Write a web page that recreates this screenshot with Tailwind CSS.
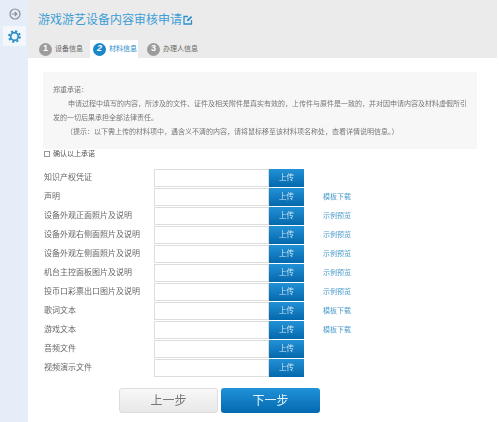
<!DOCTYPE html>
<html lang="zh-CN">
<head>
  <meta charset="UTF-8">
  <title>游戏游艺设备内容审核申请</title>
  <script src="https://cdn.jsdelivr.net/npm/@tailwindcss/browser@4"></script>
</head>
<body class="bg-white overflow-hidden font-['Liberation_Sans','Noto_Sans_CJK_SC',sans-serif]">
  <div class="flex w-[499px] h-[422px] blur-[0.35px]">
    <!-- side nav -->
    <aside class="w-[28px] shrink-0 bg-[#e4edf8] flex flex-col pt-[8px]">
      <svg class="ml-[9px] w-[12px] h-[12px]" viewBox="0 0 12 12" fill="none" stroke="#8a8f96" stroke-width="1.2">
        <circle cx="6" cy="6" r="5"/>
        <path d="M2.500 6h5M5.800 4l2 2-2 2"/>
      </svg>
      <div class="mt-[6px] ml-[3px] w-[23px] h-[20px] bg-[#f3f7fc] flex items-center justify-center">
        <svg class="w-[13px] h-[13px]" viewBox="0 0 24 24" fill="none" stroke="#2a8cc6">
          <circle cx="12" cy="12" r="7" stroke-width="3.200"/>
          <circle cx="12" cy="12" r="10" stroke-width="3.400" stroke-dasharray="3.930 3.930"/>
        </svg>
      </div>
    </aside>

    <main class="flex-1 min-w-0 flex flex-col">
      <!-- header + tabs -->
      <header class="h-[58px] bg-[#ebebeb] mr-[2px] pl-[10px] relative">
        <h1 class="pt-[12px] text-[12px] leading-[16px] text-[#3d9ed6] flex items-center">
          游戏游艺设备内容审核申请
          <svg class="w-[10px] h-[10px] ml-[1px]" viewBox="0 0 10 10" fill="none" stroke="#2f8fcb" stroke-width="1.300">
            <path d="M5 1.500H1v7.500h7.500V5"/>
            <path d="M3.800 6.300l.4-1.700L8 1l1.200 1.200-3.700 3.700z" fill="#2f8fcb" stroke="none"/>
          </svg>
        </h1>
        <nav class="absolute left-[11px] bottom-0 flex items-end h-[18px] text-[7px] text-[#666]">
          <div class="flex items-center h-[16px] gap-[3px] mb-[1px] w-[51px]">
            <span class="w-[13px] h-[13px] rounded-full bg-[#9c9c9c] text-white text-[9px] font-bold flex items-center justify-center">1</span>
            <span>设备信息</span>
          </div>
          <div class="flex items-center h-[18px] gap-[3px] bg-white w-[48px] pl-[3px] text-[#2a8ccb]">
            <span class="w-[13px] h-[13px] rounded-full bg-[#1a86c8] text-white text-[9px] font-bold italic flex items-center justify-center">2</span>
            <span>材料信息</span>
          </div>
          <div class="flex items-center h-[16px] gap-[3px] mb-[1px] ml-[9px]">
            <span class="w-[13px] h-[13px] rounded-full bg-[#9c9c9c] text-white text-[9px] font-bold flex items-center justify-center">3</span>
            <span>办理人信息</span>
          </div>
        </nav>
      </header>

      <section class="flex-1 pl-[15px]">
        <!-- notice -->
        <div class="mt-[14px] w-[434px] h-[77px] bg-[#f7f7f7] pl-[10px] pt-[11px] text-[7px] leading-[14px] text-[#777]">
          <p>郑重承诺：</p>
          <p class="pl-[15px]">申请过程中填写的内容，所涉及的文件、证件及相关附件是真实有效的，上传件与原件是一致的，并对因申请内容及材料虚假所引</p>
          <p>发的一切后果承担全部法律责任。</p>
          <p class="pl-[13px]">（提示：以下需上传的材料项中，遇含义不清的内容，请将鼠标移至该材料项名称处，查看详情说明信息。）</p>
        </div>

        <label class="ml-[1px] h-[10px] flex items-center gap-[3px] text-[7px] text-[#555]">
          <span class="w-[6px] h-[6px] border border-[#999] bg-white"></span>
          确认以上承诺
        </label>

        <!-- upload rows -->
        <div class="mt-[10px] flex flex-col gap-[1px] text-[8px] text-[#666]">
          <div class="flex items-center h-[18px]"><span class="w-[111px] pl-[1px]">知识产权凭证</span><div class="w-[115px] h-full border border-[#ddd] bg-white"></div><button class="w-[35px] h-full bg-gradient-to-b from-[#2291d6] to-[#0468ac] text-[#cfe6f5] text-[7.5px]">上传</button></div>
          <div class="flex items-center h-[18px]"><span class="w-[111px] pl-[1px]">声明</span><div class="w-[115px] h-full border border-[#ddd] bg-white"></div><button class="w-[35px] h-full bg-gradient-to-b from-[#2291d6] to-[#0468ac] text-[#cfe6f5] text-[7.5px]">上传</button><a class="ml-[19px] text-[7px] text-[#4a9bcb]">模板下载</a></div>
          <div class="flex items-center h-[18px]"><span class="w-[111px] pl-[1px]">设备外观正面照片及说明</span><div class="w-[115px] h-full border border-[#ddd] bg-white"></div><button class="w-[35px] h-full bg-gradient-to-b from-[#2291d6] to-[#0468ac] text-[#cfe6f5] text-[7.5px]">上传</button><a class="ml-[19px] text-[7px] text-[#4a9bcb]">示例预览</a></div>
          <div class="flex items-center h-[18px]"><span class="w-[111px] pl-[1px]">设备外观右侧面照片及说明</span><div class="w-[115px] h-full border border-[#ddd] bg-white"></div><button class="w-[35px] h-full bg-gradient-to-b from-[#2291d6] to-[#0468ac] text-[#cfe6f5] text-[7.5px]">上传</button><a class="ml-[19px] text-[7px] text-[#4a9bcb]">示例预览</a></div>
          <div class="flex items-center h-[18px]"><span class="w-[111px] pl-[1px]">设备外观左侧面照片及说明</span><div class="w-[115px] h-full border border-[#ddd] bg-white"></div><button class="w-[35px] h-full bg-gradient-to-b from-[#2291d6] to-[#0468ac] text-[#cfe6f5] text-[7.5px]">上传</button><a class="ml-[19px] text-[7px] text-[#4a9bcb]">示例预览</a></div>
          <div class="flex items-center h-[18px]"><span class="w-[111px] pl-[1px]">机台主控面板图片及说明</span><div class="w-[115px] h-full border border-[#ddd] bg-white"></div><button class="w-[35px] h-full bg-gradient-to-b from-[#2291d6] to-[#0468ac] text-[#cfe6f5] text-[7.5px]">上传</button><a class="ml-[19px] text-[7px] text-[#4a9bcb]">示例预览</a></div>
          <div class="flex items-center h-[18px]"><span class="w-[111px] pl-[1px]">投币口彩票出口图片及说明</span><div class="w-[115px] h-full border border-[#ddd] bg-white"></div><button class="w-[35px] h-full bg-gradient-to-b from-[#2291d6] to-[#0468ac] text-[#cfe6f5] text-[7.5px]">上传</button><a class="ml-[19px] text-[7px] text-[#4a9bcb]">示例预览</a></div>
          <div class="flex items-center h-[18px]"><span class="w-[111px] pl-[1px]">歌词文本</span><div class="w-[115px] h-full border border-[#ddd] bg-white"></div><button class="w-[35px] h-full bg-gradient-to-b from-[#2291d6] to-[#0468ac] text-[#cfe6f5] text-[7.5px]">上传</button><a class="ml-[19px] text-[7px] text-[#4a9bcb]">模板下载</a></div>
          <div class="flex items-center h-[18px]"><span class="w-[111px] pl-[1px]">游戏文本</span><div class="w-[115px] h-full border border-[#ddd] bg-white"></div><button class="w-[35px] h-full bg-gradient-to-b from-[#2291d6] to-[#0468ac] text-[#cfe6f5] text-[7.5px]">上传</button><a class="ml-[19px] text-[7px] text-[#4a9bcb]">模板下载</a></div>
          <div class="flex items-center h-[18px]"><span class="w-[111px] pl-[1px]">音频文件</span><div class="w-[115px] h-full border border-[#ddd] bg-white"></div><button class="w-[35px] h-full bg-gradient-to-b from-[#2291d6] to-[#0468ac] text-[#cfe6f5] text-[7.5px]">上传</button></div>
          <div class="flex items-center h-[18px]"><span class="w-[111px] pl-[1px]">视频演示文件</span><div class="w-[115px] h-full border border-[#ddd] bg-white"></div><button class="w-[35px] h-full bg-gradient-to-b from-[#2291d6] to-[#0468ac] text-[#cfe6f5] text-[7.5px]">上传</button></div>
        </div>

        <!-- step buttons -->
        <div class="mt-[11px] ml-[76px] flex gap-[3px] text-[12px]">
          <button class="w-[99px] h-[25px] rounded-[3px] border border-[#ddd] bg-gradient-to-b from-[#f8f8f8] to-[#e8e8e8] text-[#777]">上一步</button>
          <button class="w-[99px] h-[25px] rounded-[3px] bg-gradient-to-b from-[#1f92d8] to-[#0469b0] text-[#e6f3fb]">下一步</button>
        </div>
      </section>
    </main>
  </div>
</body>
</html>
